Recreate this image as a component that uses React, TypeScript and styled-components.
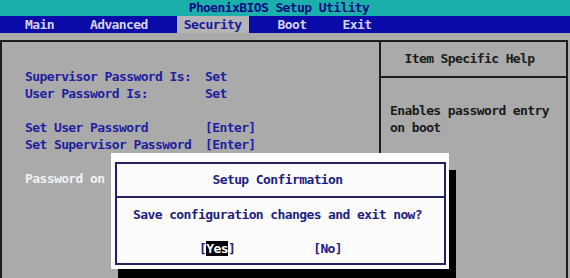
import * as React from "react";
import styled, { createGlobalStyle } from "styled-components";

const GlobalStyle = createGlobalStyle`
  html, body {
    margin: 0;
    padding: 0;
    background: #aaaaaa;
  }
`;

const Screen = styled.div`
  position: relative;
  width: 570px;
  height: 278px;
  overflow: hidden;
  background: #aaaaaa;
  font-family: "DejaVu Sans Mono", "Liberation Mono", monospace;
  font-weight: bold;
  font-size: 13px;
  letter-spacing: -0.6px;
  line-height: 17px;
  white-space: pre;
`;

const TitleBar = styled.div`
  height: 16px;
  line-height: 16px;
  background: #1bb0ac;
  color: #0a0a80;
  text-align: center;
  padding-right: 12px;
`;

const MenuBar = styled.div`
  height: 17px;
  background: #0a0aa8;
  display: flex;
  gap: 22px;
  padding-left: 18px;
`;

const MenuItem = styled.div<{ active?: boolean }>`
  padding: 0 7px;
  color: ${({ active }) => (active ? "#1a1aa0" : "#d4d4ec")};
  background: ${({ active }) => (active ? "#b4b4b4" : "transparent")};
`;

const Body = styled.div`
  padding-top: 7px;
  padding-right: 2px;
`;

const Frame = styled.div`
  display: flex;
  height: 260px;
  border-top: 2px solid #1c1c1c;
  border-left: 2px solid #1c1c1c;
  border-right: 2px solid #1c1c1c;
`;

const LeftPanel = styled.div`
  width: 377px;
  padding: 26px 0 0 23px;
  box-sizing: border-box;
`;

const Row = styled.div<{ selected?: boolean }>`
  display: grid;
  grid-template-columns: 180px auto;
  height: 17px;
  color: ${({ selected }) => (selected ? "#f2f2f2" : "#1e1ea0")};
`;

const Spacer = styled.div`
  height: 17px;
`;

const RightPanel = styled.div`
  flex: 1;
  border-left: 2px solid #1c1c1c;
  color: #1a1a1a;
`;

const HelpHeader = styled.div`
  height: 34px;
  line-height: 34px;
  text-align: center;
  border-bottom: 2px solid #1c1c1c;
  padding-right: 8px;
`;

const HelpText = styled.div`
  padding: 24px 0 0 9px;
`;

const Dialog = styled.div`
  position: absolute;
  left: 111px;
  top: 153px;
  width: 338px;
  height: 116px;
  box-sizing: border-box;
  padding: 9px 3px 4px 4px;
  background: #fcfcfc;
  box-shadow: 7px 17px 0 0 #000;
  color: #1e1e80;
`;

const DialogBox = styled.div`
  height: 100%;
  box-sizing: border-box;
  border: 2px solid #22225e;
`;

const DialogTitle = styled.div`
  height: 32px;
  line-height: 32px;
  text-align: center;
  border-bottom: 2px solid #22225e;
  padding-right: 6px;
`;

const DialogMessage = styled.div`
  padding-left: 16px;
  margin-top: 8px;
`;

const Choices = styled.div`
  display: flex;
  margin-top: 17px;
  padding-left: 82px;
  gap: 78px;
`;

const Hot = styled.span`
  background: #000;
  color: #fff;
`;

export default function App() {
  return (
    <>
      <GlobalStyle />
      <Screen>
        <TitleBar>PhoenixBIOS Setup Utility</TitleBar>
        <MenuBar>
          <MenuItem>Main</MenuItem>
          <MenuItem>Advanced</MenuItem>
          <MenuItem active>Security</MenuItem>
          <MenuItem>Boot</MenuItem>
          <MenuItem>Exit</MenuItem>
        </MenuBar>
        <Body>
          <Frame>
            <LeftPanel>
              <Row>
                <span>Supervisor Password Is:</span>
                <span>Set</span>
              </Row>
              <Row>
                <span>User Password Is:</span>
                <span>Set</span>
              </Row>
              <Spacer />
              <Row>
                <span>Set User Password</span>
                <span>[Enter]</span>
              </Row>
              <Row>
                <span>Set Supervisor Password</span>
                <span>[Enter]</span>
              </Row>
              <Spacer />
              <Row selected>
                <span>Password on</span>
              </Row>
            </LeftPanel>
            <RightPanel>
              <HelpHeader>Item Specific Help</HelpHeader>
              <HelpText>
                {"Enables password entry\non boot"}
              </HelpText>
            </RightPanel>
          </Frame>
        </Body>
        <Dialog>
          <DialogBox>
            <DialogTitle>Setup Confirmation</DialogTitle>
            <DialogMessage>Save configuration changes and exit now?</DialogMessage>
            <Choices>
              <span>
                [<Hot>Yes</Hot>]
              </span>
              <span>[No]</span>
            </Choices>
          </DialogBox>
        </Dialog>
      </Screen>
    </>
  );
}
